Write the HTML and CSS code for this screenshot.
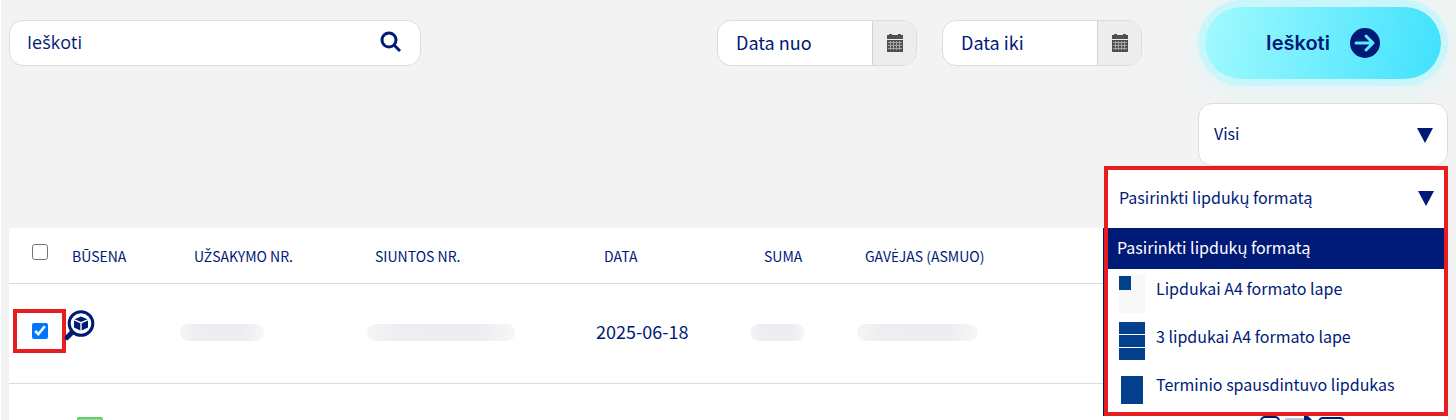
FILE: index.html
```html
<!DOCTYPE html>
<html lang="lt">
<head>
<meta charset="utf-8">
<title>Siuntos</title>
<link rel="stylesheet" href="styles.css">
</head>
<body>
<main class="page">
  <form class="filters">
    <div class="toolbar">
      <label class="search">
        <input class="field-input search-input" type="text" placeholder="Ieškoti" aria-label="Ieškoti">
        <svg class="search-icon" viewBox="0 0 22 22" aria-hidden="true"><circle cx="9" cy="9" r="7" /><path d="M14 14l6 6" /></svg>
      </label>
      <div class="dates">
        <div class="date-field">
          <input class="field-input" type="text" placeholder="Data nuo" aria-label="Data nuo">
          <button class="date-button" type="button" aria-label="Pasirinkti datą nuo">
            <svg class="calendar-icon" viewBox="0 0 18 20" aria-hidden="true"><path class="cal-fill" d="M1 2h2V1h3v1h6V1h3v1h2v4H1zM1 7h16v12H1z"/><path class="cal-grid" d="M2 9.5h14M2 12.5h14M2 15.5h14M4.500 8v9M7.500 8v9M10.500 8v9M13.500 8v9"/></svg>
          </button>
        </div>
        <div class="date-field">
          <input class="field-input" type="text" placeholder="Data iki" aria-label="Data iki">
          <button class="date-button" type="button" aria-label="Pasirinkti datą iki">
            <svg class="calendar-icon" viewBox="0 0 18 20" aria-hidden="true"><path class="cal-fill" d="M1 2h2V1h3v1h6V1h3v1h2v4H1zM1 7h16v12H1z"/><path class="cal-grid" d="M2 9.5h14M2 12.5h14M2 15.5h14M4.500 8v9M7.500 8v9M10.500 8v9M13.500 8v9"/></svg>
          </button>
        </div>
      </div>
      <button class="submit" type="button">
        <span>Ieškoti</span>
        <svg class="submit-icon" viewBox="0 0 30 30" aria-hidden="true"><circle cx="15" cy="15" r="15"/><path d="M6 15h17M16 8l7 7-7 7"/></svg>
      </button>
    </div>
    <div class="select-box">
      <select class="select" aria-label="Būsena"><option>Visi</option></select>
      <svg class="select-arrow" viewBox="0 0 16 15" aria-hidden="true"><path d="M0 0h16L8 15z"/></svg>
    </div>
    <div class="format-box">
      <select class="select" aria-label="Lipdukų formatas"><option>Pasirinkti lipdukų formatą</option></select>
      <svg class="select-arrow" viewBox="0 0 16 15" aria-hidden="true"><path d="M0 0h16L8 15z"/></svg>
      <ul class="menu">
        <li class="menu-title">Pasirinkti lipdukų formatą</li>
        <li class="menu-item">
          <svg class="menu-icon" viewBox="0 0 28 40" aria-hidden="true"><path fill="#f8f8f8" d="M1 1h26v38H1z"/><path fill="#04418c" d="M1 2h12v14H1z"/></svg>
          <span>Lipdukai A4 formato lape</span>
        </li>
        <li class="menu-item">
          <svg class="menu-icon" viewBox="0 0 28 40" aria-hidden="true"><path fill="#04418c" d="M1 0h26v12H1zM1 13h26v12H1zM1 26h26v12H1z"/></svg>
          <span>3 lipdukai A4 formato lape</span>
        </li>
        <li class="menu-item">
          <svg class="menu-icon" viewBox="0 0 28 40" aria-hidden="true"><path fill="#04418c" d="M3 6h22v28H3z"/></svg>
          <span>Terminio spausdintuvo lipdukas</span>
        </li>
      </ul>
    </div>
  </form>
  <table class="orders">
    <colgroup>
      <col class="col-check"><col class="col-status"><col class="col-order"><col class="col-parcel"><col class="col-date"><col class="col-sum"><col class="col-receiver"><col>
    </colgroup>
    <thead>
      <tr>
        <th><label class="check-all"><input class="check" type="checkbox" aria-label="Pažymėti visus"></label></th>
        <th>BŪSENA</th>
        <th class="indent">U<span class="accented">Ž</span>SAKYMO NR.</th>
        <th>SIUNTOS NR.</th>
        <th>DATA</th>
        <th class="indent">SUMA</th>
        <th>GAV<span class="accented">Ė</span>JAS (ASMUO)</th>
        <th></th>
      </tr>
    </thead>
    <tbody>
      <tr>
        <td><label class="check-frame"><input class="check" type="checkbox" checked aria-label="Pažymėti siuntą"></label></td>
        <td><svg class="track-icon" viewBox="0 0 30 31" aria-hidden="true"><circle cx="16" cy="13.500" r="11.800" fill="none" stroke="#001a78" stroke-width="3"/><path d="M6.500 23L2 27.500" stroke="#001a78" stroke-width="5" stroke-linecap="round"/><path fill="#001a78" d="M16 6.500l6.500 2.700L16 12 9.500 9.200zM9 10.500l6.300 2.700v7.300L9 17.500zM23 10.500l-6.300 2.700v7.300l6.300-3z"/></svg></td>
        <td><div class="redacted redacted-order"></div></td>
        <td><div class="redacted redacted-parcel"></div></td>
        <td><div class="date">2025-06-18</div></td>
        <td><div class="redacted redacted-sum"></div></td>
        <td><div class="redacted redacted-receiver"></div></td>
        <td></td>
      </tr>
      <tr>
        <td></td>
        <td><div class="status-ok"></div></td>
        <td></td><td></td><td></td><td></td><td></td>
        <td>
          <svg class="row-actions" viewBox="0 0 88 36" aria-hidden="true"><g fill="none" stroke="#001a78" stroke-width="2"><rect x="2" y="1" width="18" height="34" rx="4"/><rect x="60" y="2" width="25" height="32" rx="4"/></g><path d="M26 3h20" stroke="#c0c5dc" stroke-width="2"/><path fill="#001a78" d="M45 0h4l12 12-16 16z"/></svg>
        </td>
      </tr>
    </tbody>
  </table>
</main>
</body>
</html>
```
FILE: styles.css
```css
* { box-sizing: border-box; }
html, body { height: 100%; }
body {
  margin: 0;
  overflow: hidden;
  background: #f3f3f3;
  color: #001a78;
  font-family: "Noto Sans CJK JP", "Noto Sans", sans-serif;
  font-size: 18px;
}
.page { height: 100%; overflow: hidden; padding: 7px 8px 0; border-left: 1px solid #fff; }
input, select, button { font: inherit; color: inherit; margin: 0; }

.filters { display: flex; flex-direction: column; align-items: flex-end; }
.toolbar { display: flex; align-items: center; width: 100%; margin-bottom: 24px; padding-right: 7px; }
.search {
  display: flex; align-items: center;
  width: 412px; height: 46px; padding: 0 18px 2px 0;
  background: #fff; border: 1px solid #dfdcdd; border-radius: 14px;
}
.field-input {
  flex: 1; min-width: 0; height: 100%; padding: 0 18px 3px;
  border: 0; outline: 0; background: transparent;
}
.field-input::placeholder { color: #001a78; opacity: 1; }
.search-input { padding: 0 17px; font-family: "Open Sans", "Noto Sans", sans-serif; }
.search-icon { width: 22px; height: 22px; fill: none; stroke: #001a78; stroke-width: 3; }
.dates { display: flex; gap: 25px; margin-left: auto; }
.date-field {
  display: flex; width: 200px; height: 46px; overflow: hidden;
  background: #fff; border: 1px solid #dcdcdc; border-radius: 14px;
}
.date-button {
  display: flex; align-items: center; justify-content: center;
  width: 44px; padding: 0; background: #ebedef;
  border: 0; border-left: 1px solid #d0d2d4;
}
.calendar-icon { width: 18px; height: 20px; }
.cal-fill { fill: #505050; }
.cal-grid { fill: none; stroke: #a5a5a5; stroke-width: 1; }
.submit {
  display: flex; align-items: center; justify-content: center; gap: 20px;
  width: 236px; height: 72px; margin-left: 63px; padding: 0;
  border: 0; border-radius: 36px;
  background: linear-gradient(100deg, #a2fafe, #40e1fe);
  box-shadow: 0 0 0 7px #c9f6fa, 0 4px 30px 8px #dff4f5;
  font-family: Inter, "Open Sans", sans-serif; font-size: 20px; font-weight: 600;
}
.submit-icon { width: 30px; height: 30px; fill: #001a78; }
.submit-icon path { fill: none; stroke: #5de9fe; stroke-width: 3; stroke-linecap: round; stroke-linejoin: round; }

.select-box, .format-box { position: relative; font-size: 16px; }
.select-box {
  width: 250px; height: 63px;
  background: #fff; border: 1px solid #dfdcdd; border-radius: 14px;
}
.format-box { width: 344px; height: 62px; background: #fff; border: 4px solid #e71d1f; border-bottom: 0; }
.select {
  appearance: none; width: 100%; height: 100%; padding: 0 48px 3px 15px;
  border: 0; outline: 0; background: transparent;
}
.format-box .select { padding-left: 11px; padding-bottom: 5px; }
.select-arrow {
  position: absolute; top: 24px; right: 14px;
  width: 16px; height: 15px; fill: #001a78; pointer-events: none;
}
.format-box .select-arrow { top: 21px; right: 10px; }
.menu {
  position: absolute; z-index: 2; top: 100%; left: -4px; right: -4px;
  margin: 0; padding: 0; list-style: none;
  background: #fff; border: 4px solid #e71d1f; border-top: 0;
  box-shadow: -1px 0 0 #001a78;
}
.menu-title { height: 41px; padding-left: 9px; background: #001a78; color: #fff; line-height: 38px; }
.menu-item { display: flex; gap: 10px; height: 48px; padding: 5px 10px 0; line-height: 28px; }
.menu-icon { width: 28px; height: 40px; }
.menu-item:last-child { height: 47px; }

.orders { width: 100%; border-collapse: separate; border-spacing: 0; table-layout: fixed; background: #fff; }
.col-check { width: 55px; }
.col-status { width: 116px; }
.col-order { width: 187px; }
.col-parcel { width: 229px; }
.col-date { width: 154px; }
.col-sum { width: 107px; }
.col-receiver { width: 230px; }
.orders th, .orders td { padding: 0; text-align: left; vertical-align: middle; border-bottom: 1px solid #dcdcdc; white-space: nowrap; }
.orders th { height: 56px; padding-left: 8px; font-size: 14px; font-weight: 400; line-height: 20px; }
.orders th:first-child { padding-left: 0; }
.orders th.indent { padding-left: 14px; }
.orders td { height: 100px; }
.accented { font-family: "Open Sans", "Noto Sans", sans-serif; line-height: 1; }
.check-all { display: flex; justify-content: center; padding: 0 0 8px 7px; }
.check { width: 16px; height: 16px; accent-color: #0075ff; }
.check-frame {
  display: flex; align-items: center; justify-content: center;
  width: 53px; height: 44px; margin: 0 0 6px 4px; border: 4px solid #e71d1f;
}
.track-icon { display: block; width: 30px; height: 31px; margin: 0 0 16px 1px; }
.date { padding-bottom: 5px; }
.status-ok { width: 26px; height: 34px; margin-left: 13px; background: #8fdc95; border: 2px solid #6cc976; border-radius: 2px; }
.redacted { height: 17px; margin-bottom: 2px; border-radius: 9px; background: linear-gradient(90deg, #f5f5f6, #eeeef2 20%, #ededf1 75%, #f7f7f8); }
.redacted-order { width: 84px; }
.redacted-parcel { width: 148px; }
.redacted-sum { width: 55px; }
.redacted-receiver { width: 121px; }
.row-actions { display: block; width: 88px; height: 36px; margin-left: 172px; }
```
